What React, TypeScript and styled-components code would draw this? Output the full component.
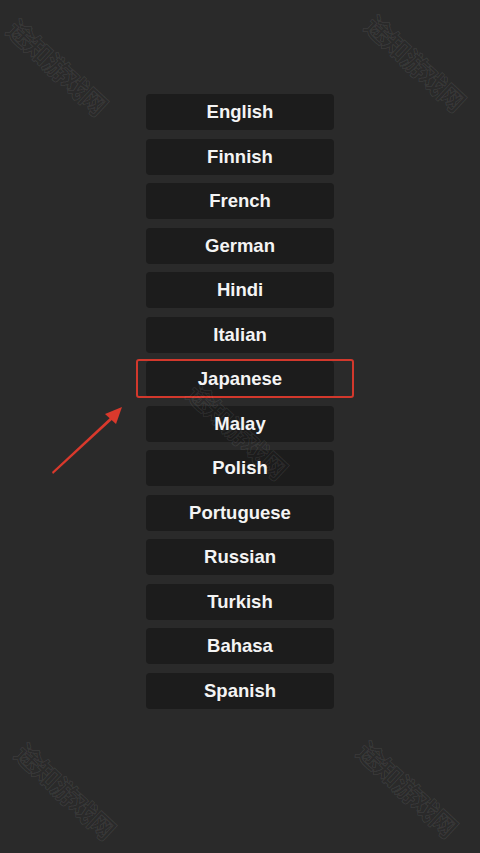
import styled, { createGlobalStyle } from "styled-components";

const languages = [
  "English",
  "Finnish",
  "French",
  "German",
  "Hindi",
  "Italian",
  "Japanese",
  "Malay",
  "Polish",
  "Portuguese",
  "Russian",
  "Turkish",
  "Bahasa",
  "Spanish",
];

// start point (left centre) of each rotated watermark
const marks = [
  { x: 12, y: 24 },
  { x: 370, y: 20 },
  { x: 20, y: 748 },
  { x: 362, y: 746 },
  { x: 192, y: 388 },
];

const GlobalStyle = createGlobalStyle`
  html, body {
    margin: 0;
    padding: 0;
    background: #2a2a2a;
  }
  body {
    font-family: "Liberation Sans", Arial, sans-serif;
  }
`;

export default function App() {
  return (
    <>
      <GlobalStyle />
      <Page>
        <LanguageList>
          {languages.map((lang) => (
            <LanguageButton key={lang}>
              {lang}
              {lang === "Japanese" && <Highlight />}
            </LanguageButton>
          ))}
        </LanguageList>
        <Arrow width="80" height="75" viewBox="0 0 80 75">
          <polygon points="3,70 2,68 62,12 64,14" fill="#d9392c" />
          <polygon points="72,3 55,10 66,20" fill="#d9392c" />
        </Arrow>
        {marks.map((m, i) => (
          <Watermark key={i} style={{ left: m.x, top: m.y - 14 }}>
            途知游戏网
          </Watermark>
        ))}
      </Page>
    </>
  );
}

const Page = styled.div`
  position: relative;
  width: 480px;
  height: 853px;
  overflow: hidden;
  background: #2a2a2a;
`;

const LanguageList = styled.div`
  display: flex;
  flex-direction: column;
  align-items: center;
  gap: 8.5px;
  padding-top: 94px;
`;

const LanguageButton = styled.div`
  position: relative;
  width: 188px;
  height: 36px;
  display: flex;
  align-items: center;
  justify-content: center;
  background: #1c1c1c;
  border-radius: 4px;
  color: #f4f4f4;
  font-size: 18.5px;
  font-weight: 700;
`;

const Highlight = styled.div`
  position: absolute;
  left: -10px;
  right: -20px;
  top: -2px;
  bottom: -1px;
  border: 2px solid #d2382c;
  border-radius: 3px;
`;

const Arrow = styled.svg`
  position: absolute;
  left: 50px;
  top: 404px;
`;

const Watermark = styled.div`
  position: absolute;
  height: 28px;
  line-height: 28px;
  transform: rotate(43deg);
  transform-origin: 0 50%;
  font-family: "Noto Sans CJK SC", sans-serif;
  font-size: 26px;
  font-weight: 700;
  letter-spacing: -1px;
  white-space: nowrap;
  color: transparent;
  -webkit-text-stroke: 1px rgba(255, 255, 255, 0.08);
  pointer-events: none;
`;
